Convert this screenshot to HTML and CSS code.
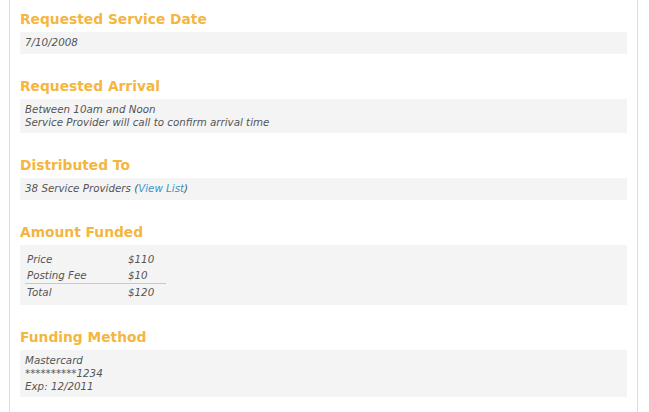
FILE: index.html
```html
<!DOCTYPE html>
<html>
<head>
<meta charset="utf-8">
<link rel="stylesheet" href="styles.css">
</head>
<body>
<div class="panel">
  <div class="section">
    <h2 class="title">Requested Service Date</h2>
    <div class="box">7/10/2008</div>
  </div>
  <div class="section">
    <h2 class="title">Requested Arrival</h2>
    <div class="box">Between 10am and Noon<br>Service Provider will call to confirm arrival time</div>
  </div>
  <div class="section">
    <h2 class="title">Distributed To</h2>
    <div class="box">38 Service Providers (<a class="link" href="#">View List</a>)</div>
  </div>
  <div class="section">
    <h2 class="title">Amount Funded</h2>
    <div class="box">
      <table class="amounts">
        <tr><td class="label">Price</td><td class="value">$110</td></tr>
        <tr class="sub"><td class="label">Posting Fee</td><td class="value">$10</td></tr>
        <tr><td class="label">Total</td><td class="value">$120</td></tr>
      </table>
    </div>
  </div>
  <div class="section">
    <h2 class="title">Funding Method</h2>
    <div class="box">Mastercard<br>**********1234<br>Exp: 12/2011</div>
  </div>
</div>
</body>
</html>
```
FILE: styles.css
```css
html, body {
  margin: 0;
  padding: 0;
  background: #fff;
}
body {
  font-family: "DejaVu Sans", Verdana, sans-serif;
}
.panel {
  margin-left: 9px;
  width: 629px;
  min-height: 412px;
  box-sizing: border-box;
  border-left: 1px solid #dcdcdc;
  border-right: 1px solid #dcdcdc;
  padding: 10px 10px 0 10px;
  display: flex;
  flex-direction: column;
  gap: 23px;
}
.title {
  margin: 0 0 4px 0;
  font-size: 13.8px;
  line-height: 18px;
  font-weight: bold;
  color: #f4b63f;
}
.box {
  background: #f4f4f4;
  padding: 4px 5px;
  font-size: 10.3px;
  line-height: 13px;
  font-style: italic;
  color: #555;
  min-height: 14px;
}
.link {
  color: #3399cc;
  text-decoration: none;
}
.amounts {
  border-collapse: collapse;
  margin: 2px 0 1px 0;
  font-size: 10.3px;
  line-height: 13px;
}
.amounts td {
  padding: 1.5px 0 1.5px 2px;
}
.amounts .label {
  width: 99px;
}
.amounts .value {
  width: 38px;
}
.amounts .sub td {
  border-bottom: 1px solid #c8c8c8;
}
```
